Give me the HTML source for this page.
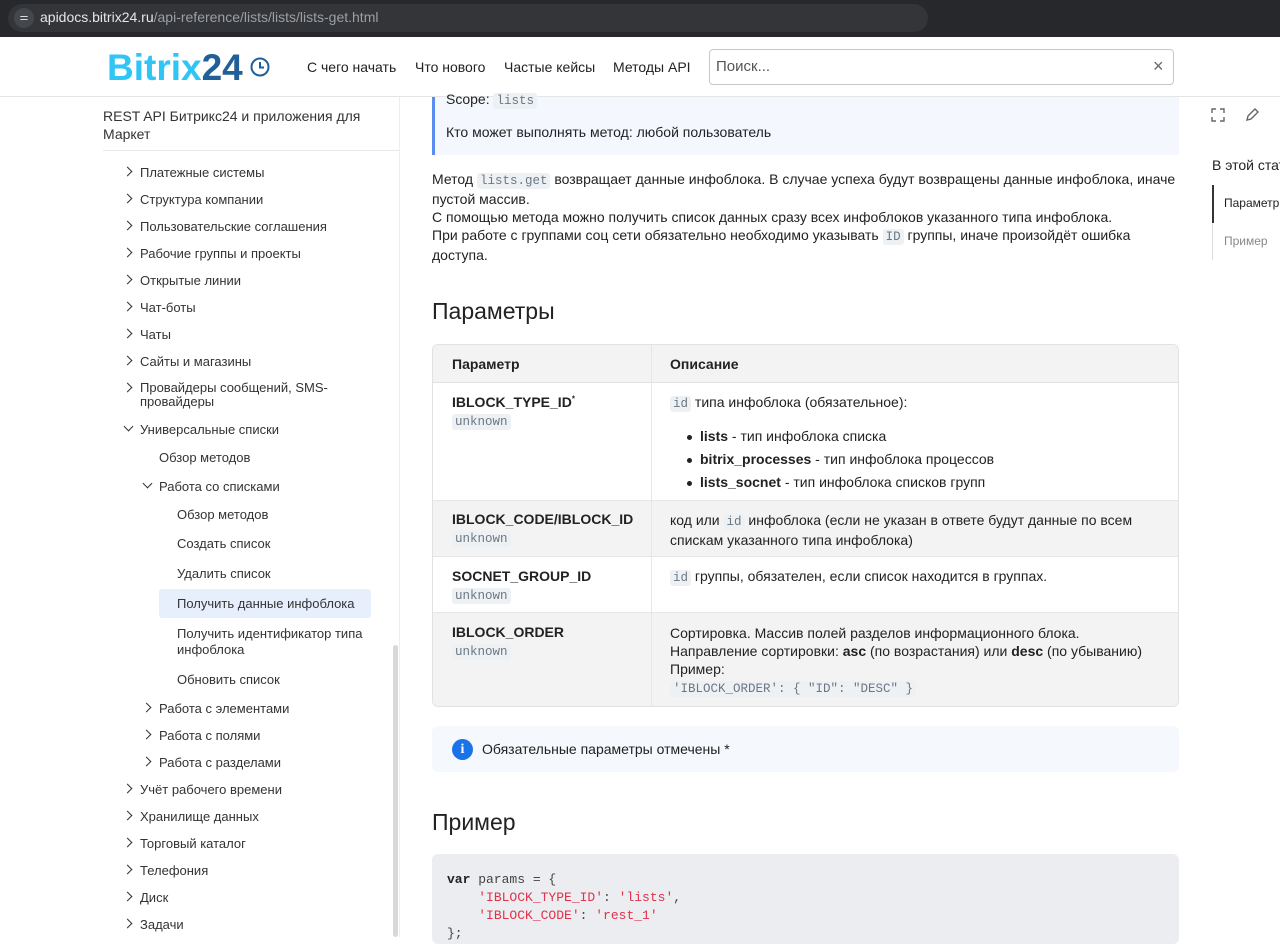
<!DOCTYPE html>
<html><head><meta charset="utf-8"><style>
*{margin:0;padding:0;box-sizing:border-box}
body{width:1280px;height:937px;overflow:hidden;background:#fff;font-family:"Liberation Sans",sans-serif;color:#222;position:relative;font-size:14px}
.a{position:absolute;white-space:nowrap}
.s{font-size:13px;color:#333}
.chev{position:absolute;width:7px;height:7px;border-right:1.6px solid #333;border-bottom:1.6px solid #333}
.r{transform:rotate(-45deg)}
.d{transform:rotate(45deg)}
code{font-family:"Liberation Mono",monospace;font-size:12.5px;background:#eef1f4;color:#6b7785;padding:1px 3px;border-radius:3px}
.m{font-family:"Liberation Mono",monospace;font-size:13px}
b{font-weight:bold}
.dot{display:inline-block;width:5px;height:5px;border-radius:50%;background:#222;margin-right:8px;vertical-align:middle}
</style></head><body>
<div class="a" style="left:0;top:0;width:1280px;height:37px;background:#26282b"></div>
<div class="a" style="left:8px;top:4px;width:920px;height:28px;background:#333538;border-radius:14px"></div>
<div class="a" style="left:14px;top:8px;width:20px;height:20px;border-radius:10px;background:#44474b;color:#ddd;font-size:10px;text-align:center;line-height:20px">⚌</div>
<div class="a" style="left:40px;top:9px;font-size:14px;color:#e6e6e6">apidocs.bitrix24.ru<span style="color:#9aa0a6">/api-reference/lists/lists/lists-get.html</span></div>
<div class="a" style="left:0;top:96px;width:1280px;height:1px;background:#e5e5e5"></div>
<div class="a" style="left:107px;top:47px;font-size:37px;font-weight:bold;color:#2fc6f6;letter-spacing:0">Bitrix<span style="color:#215f98">24</span></div>
<svg class="a" style="left:249px;top:56px" width="22" height="22" viewBox="0 0 22 22"><circle cx="11" cy="11" r="8.5" fill="none" stroke="#215f98" stroke-width="2"/><path d="M11 6v5.5h4" fill="none" stroke="#215f98" stroke-width="2"/></svg>
<div class="a" style="left:307px;top:59px;font-size:14px;color:#222">С чего начать</div>
<div class="a" style="left:415px;top:59px;font-size:14px;color:#222">Что нового</div>
<div class="a" style="left:504px;top:59px;font-size:14px;color:#222">Частые кейсы</div>
<div class="a" style="left:613px;top:59px;font-size:14px;color:#222">Методы API</div>
<div class="a" style="left:709px;top:49px;width:465px;height:36px;border:1px solid #c8c8c8;border-radius:4px"></div>
<div class="a" style="left:716px;top:58px;font-size:15px;color:#555">Поиск...</div>
<div class="a" style="left:1153px;top:56px;font-size:18px;color:#666">×</div>

<div class="a" style="left:103px;top:107px;font-size:14px;line-height:18px;color:#333;white-space:normal;width:280px">REST API Битрикс24 и приложения для Маркет</div>
<div class="a" style="left:103px;top:150px;width:297px;height:1px;background:#e8e8e8"></div>
<div class="a" style="left:399px;top:97px;width:1px;height:840px;background:#eee"></div>
<div class="a" style="left:393px;top:645px;width:5px;height:292px;background:#d8d8d8;border-radius:3px"></div>

<div class="chev r" style="left:124px;top:168px"></div><div class="a s" style="left:140px;top:165px">Платежные системы</div>
<div class="chev r" style="left:124px;top:195px"></div><div class="a s" style="left:140px;top:192px">Структура компании</div>
<div class="chev r" style="left:124px;top:222px"></div><div class="a s" style="left:140px;top:219px">Пользовательские соглашения</div>
<div class="chev r" style="left:124px;top:249px"></div><div class="a s" style="left:140px;top:246px">Рабочие группы и проекты</div>
<div class="chev r" style="left:124px;top:276px"></div><div class="a s" style="left:140px;top:273px">Открытые линии</div>
<div class="chev r" style="left:124px;top:303px"></div><div class="a s" style="left:140px;top:300px">Чат-боты</div>
<div class="chev r" style="left:124px;top:330px"></div><div class="a s" style="left:140px;top:327px">Чаты</div>
<div class="chev r" style="left:124px;top:357px"></div><div class="a s" style="left:140px;top:354px">Сайты и магазины</div>
<div class="chev r" style="left:124px;top:384px"></div><div class="a s" style="left:140px;top:381px;line-height:14px">Провайдеры сообщений, SMS-<br>провайдеры</div>
<div class="chev d" style="left:125px;top:423px"></div><div class="a s" style="left:140px;top:422px">Универсальные списки</div>
<div class="a s" style="left:159px;top:450px">Обзор методов</div>
<div class="chev d" style="left:144px;top:480px"></div><div class="a s" style="left:159px;top:479px">Работа со списками</div>
<div class="a s" style="left:177px;top:507px">Обзор методов</div>
<div class="a s" style="left:177px;top:536px">Создать список</div>
<div class="a s" style="left:177px;top:566px">Удалить список</div>
<div class="a" style="left:159px;top:589px;width:212px;height:29px;background:#e8effc;border-radius:3px"></div>
<div class="a s" style="left:177px;top:596px">Получить данные инфоблока</div>
<div class="a s" style="left:177px;top:626px;line-height:16px">Получить идентификатор типа<br>инфоблока</div>
<div class="a s" style="left:177px;top:672px">Обновить список</div>
<div class="chev r" style="left:143px;top:704px"></div><div class="a s" style="left:159px;top:701px">Работа с элементами</div>
<div class="chev r" style="left:143px;top:731px"></div><div class="a s" style="left:159px;top:728px">Работа с полями</div>
<div class="chev r" style="left:143px;top:758px"></div><div class="a s" style="left:159px;top:755px">Работа с разделами</div>
<div class="chev r" style="left:124px;top:785px"></div><div class="a s" style="left:140px;top:782px">Учёт рабочего времени</div>
<div class="chev r" style="left:124px;top:812px"></div><div class="a s" style="left:140px;top:809px">Хранилище данных</div>
<div class="chev r" style="left:124px;top:839px"></div><div class="a s" style="left:140px;top:836px">Торговый каталог</div>
<div class="chev r" style="left:124px;top:866px"></div><div class="a s" style="left:140px;top:863px">Телефония</div>
<div class="chev r" style="left:124px;top:893px"></div><div class="a s" style="left:140px;top:890px">Диск</div>
<div class="chev r" style="left:124px;top:920px"></div><div class="a s" style="left:140px;top:917px">Задачи</div>

<div class="a" style="left:432px;top:97px;width:747px;height:58px;background:#f4f8fe;border-left:3px solid #5b8def"></div>
<div class="a" style="left:446px;top:91px;font-size:14px">Scope: <code>lists</code></div>
<div class="a" style="left:446px;top:124px;font-size:14px">Кто может выполнять метод: любой пользователь</div>

<div class="a" style="left:432px;top:170px;font-size:14px;line-height:18px;white-space:normal;width:745px">Метод <code>lists.get</code> возвращает данные инфоблока. В случае успеха будут возвращены данные инфоблока, иначе пустой массив.<br>С помощью метода можно получить список данных сразу всех инфоблоков указанного типа инфоблока.<br>При работе с группами соц сети обязательно необходимо указывать <code>ID</code> группы, иначе произойдёт ошибка доступа.</div>

<div class="a" style="left:432px;top:298px;font-size:23px;color:#222">Параметры</div>

<div class="a" style="left:432px;top:344px;width:747px;height:363px;border:1px solid #e2e2e2;border-radius:6px;overflow:hidden">
 <div class="a" style="left:0;top:0;width:747px;height:38px;background:#f3f3f3;border-bottom:1px solid #e2e2e2"></div>
 <div class="a" style="left:0;top:155px;width:747px;height:57px;background:#f3f3f3;border-top:1px solid #e6e6e6;border-bottom:1px solid #e6e6e6"></div>
 <div class="a" style="left:0;top:267px;width:747px;height:96px;background:#f3f3f3;border-top:1px solid #e6e6e6"></div>
 <div class="a" style="left:218px;top:0;width:1px;height:363px;background:#e6e6e6"></div>
</div>
<div class="a" style="left:452px;top:356px;font-size:14px;font-weight:bold">Параметр</div>
<div class="a" style="left:670px;top:356px;font-size:14px;font-weight:bold">Описание</div>
<div class="a" style="left:452px;top:394px;font-size:14px;font-weight:bold">IBLOCK_TYPE_ID<sup style="font-size:8px">*</sup></div>
<div class="a" style="left:452px;top:412px"><code>unknown</code></div>
<div class="a" style="left:670px;top:394px;font-size:14px"><code>id</code> типа инфоблока (обязательное):</div>
<div class="a" style="left:687px;top:425px;font-size:14px;line-height:23px"><span class="dot"></span><b>lists</b> - тип инфоблока списка<br><span class="dot"></span><b>bitrix_processes</b> - тип инфоблока процессов<br><span class="dot"></span><b>lists_socnet</b> - тип инфоблока списков групп</div>
<div class="a" style="left:452px;top:511px;font-size:14px;font-weight:bold">IBLOCK_CODE/IBLOCK_ID</div>
<div class="a" style="left:452px;top:529px"><code>unknown</code></div>
<div class="a" style="left:670px;top:511px;font-size:14px;line-height:18px">код или <code>id</code> инфоблока (если не указан в ответе будут данные по всем<br>спискам указанного типа инфоблока)</div>
<div class="a" style="left:452px;top:568px;font-size:14px;font-weight:bold">SOCNET_GROUP_ID</div>
<div class="a" style="left:452px;top:586px"><code>unknown</code></div>
<div class="a" style="left:670px;top:568px;font-size:14px"><code>id</code> группы, обязателен, если список находится в группах.</div>
<div class="a" style="left:452px;top:624px;font-size:14px;font-weight:bold">IBLOCK_ORDER</div>
<div class="a" style="left:452px;top:642px"><code>unknown</code></div>
<div class="a" style="left:670px;top:624px;font-size:14px;line-height:18px">Сортировка. Массив полей разделов информационного блока.<br>Направление сортировки: <b>asc</b> (по возрастания) или <b>desc</b> (по убыванию)<br>Пример:<br><code>'IBLOCK_ORDER': { "ID": "DESC" }</code></div>

<div class="a" style="left:432px;top:726px;width:747px;height:46px;background:#f5f8fc;border-radius:6px"></div>
<div class="a" style="left:452px;top:739px;width:21px;height:21px;border-radius:50%;background:#1a73e8;color:#fff;font-weight:bold;font-size:14px;text-align:center;line-height:21px;font-family:'Liberation Serif',serif">i</div>
<div class="a" style="left:482px;top:741px;font-size:14px">Обязательные параметры отмечены *</div>

<div class="a" style="left:432px;top:809px;font-size:23px">Пример</div>
<div class="a" style="left:432px;top:854px;width:747px;height:90px;background:#ebedf0;border-radius:6px"></div>
<pre class="a m" style="left:447px;top:871px;line-height:18px;color:#444;white-space:pre;font-family:'Liberation Mono',monospace"><b style="color:#222">var</b> params = {
    <span style="color:#e0324b">'IBLOCK_TYPE_ID'</span>: <span style="color:#e0324b">'lists'</span>,
    <span style="color:#e0324b">'IBLOCK_CODE'</span>: <span style="color:#e0324b">'rest_1'</span>
};</pre>

<svg class="a" style="left:1211px;top:108px" width="14" height="14" viewBox="0 0 14 14" fill="none" stroke="#666" stroke-width="1.4"><path d="M1 5V1h4M9 1h4v4M13 9v4H9M5 13H1V9"/></svg>
<svg class="a" style="left:1245px;top:107px" width="15" height="15" viewBox="0 0 15 15" fill="none" stroke="#666" stroke-width="1.4"><path d="M2 13l1-4 7-7 3 3-7 7z"/></svg>
<div class="a" style="left:1212px;top:157px;font-size:14px">В этой статье</div>
<div class="a" style="left:1212px;top:185px;width:2px;height:38px;background:#333"></div>
<div class="a" style="left:1212px;top:223px;width:1px;height:37px;background:#ddd"></div>
<div class="a" style="left:1224px;top:196px;font-size:12px;color:#222">Параметры</div>
<div class="a" style="left:1224px;top:234px;font-size:12px;color:#888">Пример</div>
</body></html>
